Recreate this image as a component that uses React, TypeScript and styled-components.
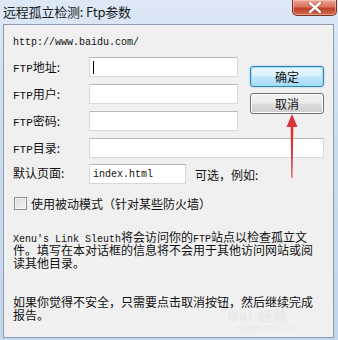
import React from 'react'
import styled, { createGlobalStyle } from 'styled-components'

const GlobalStyle = createGlobalStyle`
	html, body {
		margin: 0;
		padding: 0;
		background: #c5d8ee;
	}
	#root {
		width: 338px;
		height: 340px;
	}
`

const CJK = `"Noto Sans CJK SC", "Noto Sans", sans-serif`
const MONO = `"Liberation Mono", "DejaVu Sans Mono", monospace`

const Window = styled.div`
	position: relative;
	width: 338px;
	height: 340px;
	box-sizing: border-box;
	display: flex;
	flex-direction: column;
	padding: 0 4px 2px 3px;
	background: linear-gradient(180deg, #dce8f6 0%, #cbdcf0 40%, #c2d6ec 100%);
	font-family: ${CJK};
	color: #111;
	overflow: hidden;
`

const TitleBar = styled.div`
	height: 24px;
	flex: none;
	display: flex;
	align-items: flex-start;
	justify-content: space-between;
`

const Title = styled.span`
	font-size: 13px;
	line-height: 24px;
	color: #1b1b1b;
	letter-spacing: -0.2px;
`

const CloseButton = styled.div`
	width: 45px;
	height: 16px;
	margin-right: -3px;
	box-sizing: border-box;
	border: 1px solid #7a3126;
	border-top: none;
	border-radius: 0 0 5px 5px;
	background: linear-gradient(180deg, #e9a394 0%, #d9735f 45%, #c0412a 55%, #d0674e 100%);
	box-shadow: inset 0 0 0 1px rgba(255, 220, 210, 0.5);
	display: flex;
	align-items: center;
	justify-content: center;
`

const Client = styled.div`
	flex: 1;
	background: #f0f0f0;
	border: 1px solid #8f9bab;
	padding: 12px 9px 0 9px;
	display: flex;
	flex-direction: column;
`

const Mono = styled.span<{ $size?: number }>`
	font-family: ${MONO};
	font-size: ${p => p.$size ?? 10}px;
	letter-spacing: 0;
`

const UrlLine = styled.div`
	height: 12px;
	line-height: 12px;
	font-family: ${MONO};
	font-size: 10px;
`

const FormGrid = styled.div`
	margin-top: 8px;
	display: grid;
	grid-template-columns: 76px 149px 12px 74px;
	grid-auto-rows: 20px;
	row-gap: 7px;
`

const Label = styled.div<{ $row: number; $shift?: number }>`
	grid-column: 1;
	grid-row: ${p => p.$row};
	margin-top: ${p => p.$shift ?? 0}px;
	font-size: 12px;
	line-height: 20px;
	white-space: nowrap;
`

const Input = styled.div<{ $row?: number; $span?: boolean; $width?: number }>`
	grid-column: ${p => (p.$span ? '2 / 5' : '2')};
	grid-row: ${p => p.$row ?? 'auto'};
	width: ${p => (p.$width ? `${p.$width}px` : 'auto')};
	box-sizing: border-box;
	height: 20px;
	background: #fff;
	border: 1px solid #d6d9de;
	border-top-color: #b4b8bf;
	display: flex;
	align-items: center;
	padding-left: 3px;
	font-family: ${MONO};
	font-size: 10px;
`

const Caret = styled.span`
	width: 1px;
	height: 13px;
	background: #000;
`

const ButtonColumn = styled.div`
	grid-column: 4;
	grid-row: 1 / 4;
	padding-top: 9px;
	display: flex;
	flex-direction: column;
	gap: 6px;
`

const Button = styled.div<{ $primary?: boolean }>`
	height: 21px;
	box-sizing: border-box;
	border-radius: 3px;
	border: 1px solid ${p => (p.$primary ? '#3c7fb1' : '#707070')};
	background: ${p =>
		p.$primary
			? 'linear-gradient(180deg, #eaf6fd 0%, #d9f0fc 48%, #bee6fd 52%, #a7d9f5 100%)'
			: 'linear-gradient(180deg, #f2f2f2 0%, #ebebeb 48%, #dddddd 52%, #cfcfcf 100%)'};
	box-shadow: ${p =>
		p.$primary ? 'inset 0 0 0 1px #94e0f7, 0 0 2px #6ec6ef' : 'inset 0 0 0 1px #fcfcfc'};
	display: flex;
	align-items: center;
	justify-content: center;
	font-size: 12px;
	color: #111;
`

const DefaultRow = styled.div`
	grid-column: 2 / 5;
	grid-row: 5;
	margin-top: -2px;
	display: flex;
	align-items: center;
	gap: 9px;
`

const Hint = styled.span`
	font-size: 12px;
	white-space: nowrap;
`

const CheckRow = styled.div`
	margin-top: 12px;
	height: 13px;
	display: flex;
	align-items: center;
	gap: 4px;
	padding-left: 1px;
`

const CheckBox = styled.div`
	width: 13px;
	height: 13px;
	box-sizing: border-box;
	border: 1px solid #8f8f8f;
	background: linear-gradient(135deg, #dcdcdc 0%, #f2f2f2 100%);
	box-shadow: inset 0 0 0 1px #f4f4f4;
`

const CheckLabel = styled.span`
	font-size: 12px;
	line-height: 13px;
	white-space: nowrap;
`

const Paragraph = styled.div<{ $gap: number }>`
	margin-top: ${p => p.$gap}px;
	font-size: 12px;
	line-height: 13px;
	letter-spacing: 0;
`

const Line = styled.div`
	white-space: nowrap;
	height: 13px;
`

const Arrow = styled.svg`
	position: absolute;
	left: 282px;
	top: 110px;
`

const Watermark = styled.div`
	position: absolute;
	left: 228px;
	top: 309px;
	display: flex;
	flex-direction: column;
	color: rgba(220, 224, 230, 0.45);
	font-family: "Liberation Sans", ${CJK};
	pointer-events: none;
`

const WatermarkLogo = styled.span`
	font-size: 14px;
	font-weight: bold;
	letter-spacing: 1px;
	line-height: 14px;
`

const WatermarkUrl = styled.span`
	font-size: 8px;
	line-height: 10px;
	margin-left: 8px;
`

const App: React.FC = () => {
	return (
		<>
			<GlobalStyle />
			<Window>
				<TitleBar>
					<Title>远程孤立检测: Ftp参数</Title>
					<CloseButton>
						<svg width="14" height="11" viewBox="0 0 14 11">
							<path d="M2 1 L12 10 M12 1 L2 10" stroke="#5a1a12" strokeWidth="3.6" strokeLinecap="round" opacity="0.5" />
							<path d="M2 1 L12 10 M12 1 L2 10" stroke="#ffffff" strokeWidth="2.4" strokeLinecap="round" />
						</svg>
					</CloseButton>
				</TitleBar>
				<Client>
					<UrlLine>http://www.baidu.com/</UrlLine>
					<FormGrid>
						<Label $row={1}>
							<Mono $size={11}>FTP</Mono>地址:
						</Label>
						<Input $row={1}>
							<Caret />
						</Input>
						<ButtonColumn>
							<Button $primary>确定</Button>
							<Button>取消</Button>
						</ButtonColumn>
						<Label $row={2}>
							<Mono $size={11}>FTP</Mono>用户:
						</Label>
						<Input $row={2} />
						<Label $row={3}>
							<Mono $size={11}>FTP</Mono>密码:
						</Label>
						<Input $row={3} />
						<Label $row={4}>
							<Mono $size={11}>FTP</Mono>目录:
						</Label>
						<Input $row={4} $span />
						<Label $row={5} $shift={-2}>
							默认页面:
						</Label>
						<DefaultRow>
							<Input $width={97}>index.html</Input>
							<Hint>可选，例如:</Hint>
						</DefaultRow>
					</FormGrid>
					<CheckRow>
						<CheckBox />
						<CheckLabel>使用被动模式（针对某些防火墙）</CheckLabel>
					</CheckRow>
					<Paragraph $gap={20}>
						<Line>
							<Mono>Xenu's Link Sleuth</Mono>将会访问你的<Mono>FTP</Mono>站点以检查孤立文
						</Line>
						<Line>件。填写在本对话框的信息将不会用于其他访问网站或阅</Line>
						<Line>读其他目录。</Line>
					</Paragraph>
					<Paragraph $gap={26}>
						<Line>如果你觉得不安全，只需要点击取消按钮，然后继续完成</Line>
						<Line>报告。</Line>
					</Paragraph>
				</Client>
				<Watermark>
					<WatermarkLogo>Bai 经验</WatermarkLogo>
					<WatermarkUrl>jingyan.baidu.com</WatermarkUrl>
				</Watermark>
				<Arrow width="20" height="72" viewBox="0 0 20 72">
					<path d="M10 4 L4.5 17 L15.5 17 Z" fill="#d8353b" />
					<path d="M8.6 16 L11.4 16 L10.4 68 L9.4 68 Z" fill="#d8353b" />
				</Arrow>
			</Window>
		</>
	)
}

export default App
